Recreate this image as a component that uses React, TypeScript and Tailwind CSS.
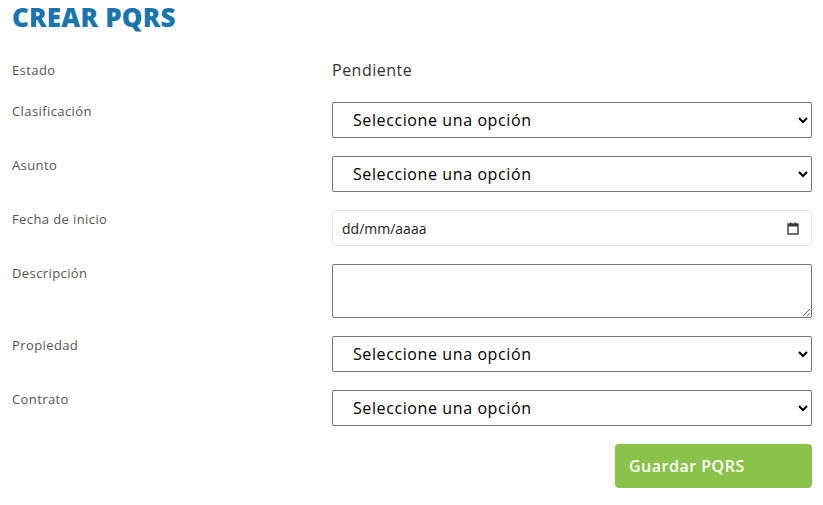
import React from "react";

const font = { fontFamily: '"Open Sans", "Liberation Sans", sans-serif' };

const SelectField = () => (
  <select
    defaultValue=""
    className="h-9 w-full rounded-[2px] border border-[#767676] bg-white pl-[16px] pr-2 text-[16px] tracking-[0.6px] text-black"
  >
    <option value="">Seleccione una opción</option>
  </select>
);

const Label = ({ children, className = "" }: { children: React.ReactNode; className?: string }) => (
  <div className={"text-[13px] leading-[18px] tracking-[0.4px] text-[#555] " + className}>{children}</div>
);

const CalendarIcon = () => (
  <svg width="12" height="13" viewBox="0 0 12 13" fill="none">
    <rect x="1" y="2" width="10" height="10" stroke="#3a3a3a" strokeWidth="1.4" />
    <rect x="1" y="2" width="10" height="2.5" fill="#3a3a3a" />
    <rect x="3" y="0.5" width="1.4" height="2" fill="#3a3a3a" />
    <rect x="7.6" y="0.5" width="1.4" height="2" fill="#3a3a3a" />
  </svg>
);

export default function App() {
  return (
    <div className="min-h-[505px] bg-white" style={font}>
      <div className="ml-3 w-[800px]">
        <h1 className="mb-[22px] text-[26px] font-extrabold leading-[34px] tracking-[0.2px] text-[#1b75ad]">
          CREAR PQRS
        </h1>

        <div className="grid grid-cols-[320px_480px] gap-y-[18px]">
          <Label className="pt-[5px]">Estado</Label>
          <div className="h-7 text-[16px] leading-[28px] tracking-[0.5px] text-[#333]">Pendiente</div>

          <Label>Clasificación</Label>
          <SelectField />

          <Label>Asunto</Label>
          <SelectField />

          <Label>Fecha de inicio</Label>
          <div className="flex h-9 items-center justify-between rounded-[4px] border border-[#e6e6e6] pl-[9px] pr-[12px] text-[14px] text-[#222]">
            <span>dd/mm/aaaa</span>
            <CalendarIcon />
          </div>

          <Label>Descripción</Label>
          <textarea className="block h-[54px] w-full rounded-[2px] border border-[#767676] bg-white" />

          <Label>Propiedad</Label>
          <SelectField />

          <Label>Contrato</Label>
          <SelectField />

          <div />
          <div className="flex justify-end">
            <button className="h-11 w-[197px] rounded-[4px] bg-[#8bc34a] px-[14px] text-left text-[16px] font-semibold tracking-[0.5px] text-white">
              Guardar PQRS
            </button>
          </div>
        </div>
      </div>
    </div>
  );
}
